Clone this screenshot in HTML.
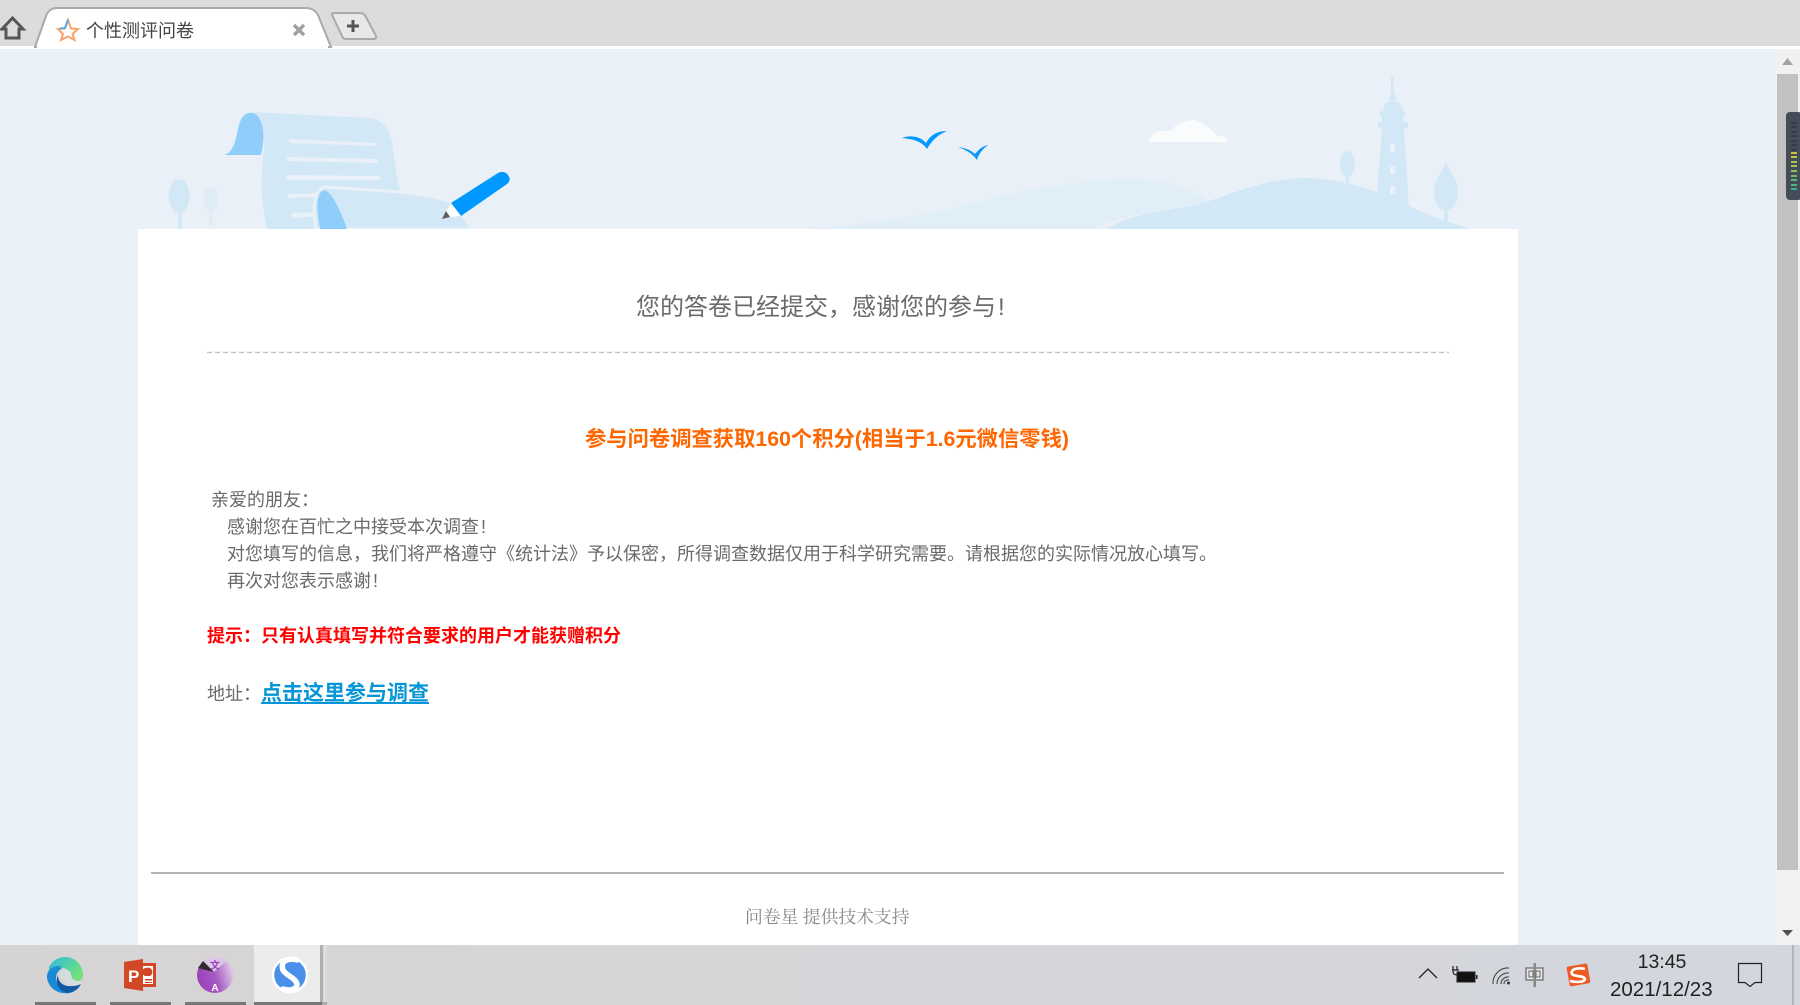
<!DOCTYPE html>
<html lang="zh-CN"><head><meta charset="utf-8"><title>个性测评问卷</title>
<style>
html,body{margin:0;padding:0;width:1800px;height:1005px;overflow:hidden;background:#e9f0f7}
body{position:relative;font-family:"Liberation Sans","Noto Sans CJK SC",sans-serif}
.t{position:absolute;white-space:nowrap;font-family:"Liberation Sans","Noto Sans CJK SC",sans-serif}
svg{position:absolute;left:0;top:0}
</style></head><body>
<div style="position:absolute;left:0;top:0;width:1800px;height:46px;background:#dcdcdc"></div>
<div style="position:absolute;left:0;top:46px;width:1800px;height:3px;background:#fff"></div>
<svg width="1800" height="1005" viewBox="0 0 1800 1005">
<path d="M35 47 L46 16 Q49 8 57 8 L306 8 Q314 8 318 15 L331 47 Z" fill="#fff" stroke="#aaa" stroke-width="2"/>
<rect x="37" y="46" width="291" height="3" fill="#fff"/>
<path d="M332 14 Q332 13 335 13 L360 13 Q364 13 366 17 L376 36 Q377 39 373 39 L346 39 Q343 39 342 36 L332 15 Z" fill="#e8e8e8" stroke="#aaa" stroke-width="2"/>
<path d="M347 26 H359 M353 20 V32" stroke="#555" stroke-width="3" fill="none"/>
<path d="M2 29 L12.500 18 L23 29 H19 V38 H6 V29 Z" fill="none" stroke="#555" stroke-width="3" stroke-linejoin="miter"/>
<path d="M68 20 L71 28.500 L78 29 L72.500 34 L74.500 40 L68 36.500 L61 40 L63 34 L58 29 L65 28.500 Z" fill="#fff" stroke="#f8a46c" stroke-width="2"/>
<path d="M68 19.500 L65 28 L60 28.500" fill="none" stroke="#5aa8f0" stroke-width="2"/>
<path d="M294 25 L304 35 M304 25 L294 35" stroke="#a0a0a0" stroke-width="3.400"/>
<!-- left illustration -->
<ellipse cx="179" cy="196" rx="10.500" ry="17" fill="#d3e8f6"/><rect x="178" y="205" width="4" height="25" fill="#d3e8f6"/>
<ellipse cx="211" cy="199" rx="7.500" ry="12.500" fill="#dfecf6"/><rect x="209.500" y="205" width="3" height="20" fill="#dfecf6"/>
<path d="M252 112 L370 118 Q390 120 393 150 Q396 175 401 195 L420 229 L267 229 Q258 190 264 150 Q266 120 252 112 Z" fill="#d3e8f6"/>
<path d="M289 139 L376 143 V146 L289 143 Z M287 157 L378 159 V163 L287 161 Z M286 175 L380 176 V180 L286 180 Z M288 194 L320 193 V197 L288 198 Z M292 213 L320 212 V216 L292 218 Z" fill="#e9f0f7"/>
<path d="M224 155 C236 152 236 133 240 122 C244 110 256 110 260 120 C265 130 264 142 261 155 Z" fill="#8fcefb"/>
<path d="M316 229 Q310 190 325 187 L400 192 Q435 196 452 202 L473 229 Z" fill="#d3e8f6" stroke="#e9f0f7" stroke-width="3"/>
<path d="M320 229 Q313 192 325 190 Q335 195 347 229 Z" fill="#8fcefb"/>
<rect x="414" y="229" width="100" height="5" fill="#fff"/>
<path d="M451 203 L498 173 Q504 170 508 175 Q512 180 507 184 L461 216 Z" fill="#0099ff"/>
<path d="M451 203 L461 216 L450 217 L446 212 Z" fill="#fff"/>
<path d="M442 219 L450 217 L446 211 Z" fill="#5c5c5c"/>
<!-- right illustration -->
<path d="M814 229 C880 222 930 215 974 203 C1040 186 1100 178 1143 180 C1170 182 1195 190 1209 202 C1170 207 1125 215 1090 229 Z" fill="#e0eef7"/>
<path d="M1107 229 C1130 214 1165 210 1195 205 C1225 198 1260 178 1308 178 C1335 179 1360 186 1376 192 L1409 206 C1430 216 1450 223 1471 229 Z" fill="#d3e8f6"/>
<path d="M1377 194 L1382 128 H1404 L1409 208 L1385 208 Z" fill="#d3e8f6"/>
<rect x="1378" y="122" width="30" height="6.500" fill="#d3e8f6"/>
<path d="M1382 122 V117 H1380 V111 H1383 Q1384 101 1392.500 101 Q1402 101 1403 111 H1405 V117 H1403 V122 Z" fill="#d3e8f6"/>
<circle cx="1392.500" cy="97" r="3.500" fill="#d3e8f6"/><rect x="1391" y="77" width="2.500" height="20" fill="#d3e8f6"/>
<path d="M1390 146 Q1390 144 1392.500 144 Q1395 144 1395 146 V152 H1390 Z M1390 168 Q1390 166 1392.500 166 Q1395 166 1395 168 V174 H1390 Z M1390 188 Q1390 186 1392.500 186 Q1395 186 1395 188 V194 H1390 Z" fill="#e9f0f7"/>
<ellipse cx="1347.500" cy="164" rx="7.500" ry="13" fill="#d3e8f6"/><rect x="1346" y="172" width="3" height="15" fill="#d3e8f6"/>
<path d="M1446 163 C1450 172 1458 178 1458 192 C1458 204 1452 210 1446 210 C1438 210 1434 202 1434 192 C1434 180 1442 172 1446 163 Z" fill="#d3e8f6"/><rect x="1444" y="208" width="4" height="16" fill="#d3e8f6"/>
<path d="M902 138 C910 135 920 136 926 143 C930 136 936 131 947 131 C939 134 932 140 927 149 C922 141 912 139 902 138 Z" fill="#0099ff"/>
<path d="M958 147 C965 148 971 150 975 154 C979 149 983 146 988 145 C983 149 979 153 977 160 C972 153 966 150 958 147 Z" fill="#0a99fa"/>
<path d="M1148 142 C1152 135 1156 130 1164 131 H1171 C1176 124 1184 120 1194 120 C1205 122 1212 130 1217 136 C1223 135 1227 137 1227 142 Z" fill="#fafbfd"/>
<rect x="138" y="229" width="1380" height="716" fill="#fff"/>
<path d="M207 352.500 H1449" stroke="#c4c4c4" stroke-width="1.500" stroke-dasharray="5 3"/>
<rect x="151" y="872" width="1353" height="2" fill="#b4b4b4"/>
<!-- scrollbar -->
<rect x="1775" y="49" width="25" height="896" fill="#f1f1f1"/>
<rect x="1777" y="74" width="21" height="796" fill="#c1c1c1"/>
<path d="M1782 65 L1787.500 58 L1793 65 Z" fill="#a3a3a3"/>
<path d="M1782 930 H1793 L1787.500 936 Z" fill="#505050"/>
<rect x="1786" y="112" width="16" height="88" rx="4" fill="#454b59"/>
<g fill="#343a47"><rect x="1791" y="122" width="6" height="2"/><rect x="1791" y="126" width="6" height="2"/><rect x="1791" y="131" width="6" height="2"/><rect x="1791" y="135" width="6" height="2"/><rect x="1791" y="140" width="6" height="2"/><rect x="1791" y="144" width="6" height="2"/><rect x="1791" y="149" width="6" height="2"/></g>
<rect x="1791" y="152" width="6" height="2" fill="#c8c436"/><rect x="1791" y="156" width="6" height="2" fill="#c6c63c"/><rect x="1791" y="161" width="6" height="2" fill="#b4c446"/><rect x="1791" y="165" width="6" height="2" fill="#a4c44e"/><rect x="1791" y="170" width="6" height="2" fill="#8cc05a"/><rect x="1791" y="175" width="6" height="2" fill="#74bc68"/><rect x="1791" y="179" width="6" height="2" fill="#5cb878"/><rect x="1791" y="184" width="6" height="2" fill="#48b488"/><rect x="1791" y="188" width="6" height="2" fill="#34b094"/>
<!-- taskbar -->
<defs>
<linearGradient id="tb" x1="0" x2="1"><stop offset="0" stop-color="#d6d4d3"/><stop offset=".5" stop-color="#d6d6da"/><stop offset="1" stop-color="#d3d6de"/></linearGradient>
<linearGradient id="e1" x1="0" x2="1" y1="0" y2=".6"><stop offset="0" stop-color="#2cbcdc"/><stop offset="1" stop-color="#72e27c"/></linearGradient>
<linearGradient id="pu" x1="0" x2="1" y1=".6" y2=".3"><stop offset="0" stop-color="#9a3fb8"/><stop offset=".5" stop-color="#a85cc4"/><stop offset="1" stop-color="#e2cfe9"/></linearGradient>
</defs>
<rect x="0" y="945" width="1800" height="60" fill="url(#tb)"/>
<rect x="254" y="945" width="66" height="60" fill="#ececec"/>
<rect x="320" y="945" width="3" height="60" fill="#b0b0b0"/>
<rect x="323" y="945" width="4" height="60" fill="#dcdcdc"/>
<rect x="35" y="1002" width="61" height="3" fill="#777"/><rect x="110" y="1002" width="61" height="3" fill="#777"/><rect x="185" y="1002" width="61" height="3" fill="#777"/><rect x="254" y="1002" width="68" height="3" fill="#777"/><rect x="322" y="1002" width="5" height="3" fill="#aaa"/>
<!-- edge -->
<path d="M49 967 C53 960 59 957 65 957 C76 957 83 966 83 975 C83 979 81 981 77 981 C72 981 71 978 71 975 C70 971 66 968 62 968 C56 968 52 970 49 974 Z" fill="url(#e1)"/>
<path d="M60 973 C63 968 70 969 71 974 C71 978 74 981 79 981 L82 983 C76 986 69 986 66 983 C62 980 60 977 60 973 Z" fill="#d4dcdc"/>
<path d="M47 975 C48 968 55 965 62 966 C58 968 55 972 55 977 C55 985 62 992 70 993 C57 995 47 987 47 975 Z" fill="#1d90da"/>
<path d="M47 976 C50 970 56 967 62 968 C58 971 56 974 56 978 C56 984 61 990 68 993 C56 994 47 986 47 976 Z" fill="#1a8ad6"/>
<path d="M58 975 C58 984 66 987 72 986 C76 986 79 985 81 984 C78 990 72 993 68 993 C60 992 54 984 58 975 Z" fill="#0e5aa3"/>
<!-- powerpoint -->
<rect x="142" y="963" width="14" height="24" fill="#d24726"/><rect x="143" y="966" width="10" height="18" fill="#fff"/>
<path d="M146 968 a4 4 0 0 0 0 8 h4 a4 4 0 0 0 -4 -8 Z" fill="#d24726"/><path d="M145 979 h7 v1.500 h-7z M145 982 h7 v1 h-7z" fill="#d24726"/>
<path d="M124 962 L143 959 V991 L124 988 Z" fill="#d24726"/>
<text x="128" y="982" font-family="Liberation Sans" font-weight="700" font-size="17" fill="#fff">P</text>
<!-- purple -->
<circle cx="215" cy="975" r="18" fill="url(#pu)"/>
<path d="M199 966 A18 18 0 0 1 226 961 L214 972 Z" fill="#dcc6e8"/>
<path d="M198 968 L203 961 L214 972 Z" fill="#2e2a30"/>
<text x="215" y="969" text-anchor="middle" font-family="Noto Sans CJK SC" font-size="10" font-weight="700" fill="#9a3fb8">文</text>
<text x="215" y="991" text-anchor="middle" font-family="Liberation Sans" font-size="10" font-weight="700" fill="#fff">A</text>
<circle cx="290" cy="975" r="17" fill="#4a90e8" stroke="#fff" stroke-width="2.500"/>
<path d="M297 960 C286 957 280 963 283 970 C286 976 297 978 297 985 C296 990 289 991 283 989" fill="none" stroke="#fff" stroke-width="5.500" stroke-linecap="round"/>
<path d="M1419 978 L1428 969 L1437 978" fill="none" stroke="#222" stroke-width="1.300"/>
<rect x="1457" y="972" width="18" height="10" fill="#111" stroke="#222"/><rect x="1476" y="975" width="1.500" height="4" fill="#222"/>
<path d="M1453 966 V971 Q1453 975 1457 975 H1459 M1452 970 H1459 M1457 966 V970" fill="none" stroke="#222" stroke-width="1.200"/>
<g fill="none" stroke="#444" stroke-width="1.100"><path d="M1493 984 A15 15 0 0 1 1509 968"/><path d="M1497 984 A11 11 0 0 1 1509 973"/><path d="M1501 984 A7 7 0 0 1 1509 977"/><path d="M1504 984 A4 4 0 0 1 1509 980"/></g><circle cx="1508.500" cy="983" r="1.500" fill="#333"/>
<rect x="1526" y="968" width="17" height="12" fill="#e8e8ea" stroke="#777" stroke-width="1.400"/>
<rect x="1533.500" y="963" width="2.500" height="24" fill="#888"/>
<path d="M1529 971 h4 v6 h-4z M1536 971 h4 v6 h-4z" fill="none" stroke="#666"/>
<rect x="1568" y="965" width="21" height="20" rx="2" fill="#ee5a24" transform="rotate(-10 1578 975)"/>
<path d="M1585 969 C1576 967 1570 970 1572 974 C1574 977 1584 975 1585 979 C1584 983 1575 982 1570 981" fill="none" stroke="#fff" stroke-width="2.600"/>
<path d="M1738.500 963.500 H1761.500 V982.500 H1755 L1750 986.500 L1745 982.500 H1738.500 Z" fill="none" stroke="#222" stroke-width="1.200"/>
<rect x="1792" y="945" width="2" height="60" fill="#b5b5b8"/>
</svg>
<div class="t" style="left:86px;top:17px;font-size:18px;line-height:28px;color:#444">个性测评问卷</div>
<div class="t" style="left:636px;top:292px;font-size:24px;line-height:32px;color:#6a6a6a">您的答卷已经提交&#xFF0C;感谢您的参与<span style="margin-left:2px">!</span></div>
<div class="t" style="left:585px;top:423px;font-size:21.300px;line-height:32px;font-weight:700;color:#ff6600">参与问卷调查获取160个积分(相当于1.6元微信零钱)</div>
<div class="t" style="left:211px;top:487px;font-size:18px;line-height:27px;color:#6a6a6a">亲爱的朋友&#xFF1A;</div>
<div class="t" style="left:227px;top:514px;font-size:18px;line-height:27px;color:#6a6a6a">感谢您在百忙之中接受本次调查<span style="margin-left:2px">!</span></div>
<div class="t" style="left:227px;top:541px;font-size:18px;line-height:27px;color:#6a6a6a">对您填写的信息&#xFF0C;我们将严格遵守《统计法》予以保密&#xFF0C;所得调查数据仅用于科学研究需要。请根据您的实际情况放心填写。</div>
<div class="t" style="left:227px;top:568px;font-size:18px;line-height:27px;color:#6a6a6a">再次对您表示感谢<span style="margin-left:2px">!</span></div>
<div class="t" style="left:207px;top:623px;font-size:18px;line-height:27px;font-weight:700;color:#ff0000">提示&#xFF1A;只有认真填写并符合要求的用户才能获赠积分</div>
<div class="t" style="left:207px;top:681px;font-size:18px;line-height:27px;color:#6a6a6a">地址&#xFF1A;</div>
<div class="t" style="left:261px;top:679px;font-size:21px;line-height:30px;font-weight:700;color:#0695d6;text-decoration:underline">点击这里参与调查</div>
<div class="t" style="left:745px;top:904px;font-size:17.800px;line-height:26px;color:#888;font-family:'Liberation Serif','Noto Serif CJK SC',serif">问卷星 提供技术支持</div>
<div class="t" style="left:1630px;top:950px;width:64px;text-align:center;font-size:19.500px;line-height:24px;color:#222">13:45</div>
<div class="t" style="left:1610px;top:978px;font-size:20.500px;line-height:24px;color:#222">2021/12/23</div>
</body></html>
